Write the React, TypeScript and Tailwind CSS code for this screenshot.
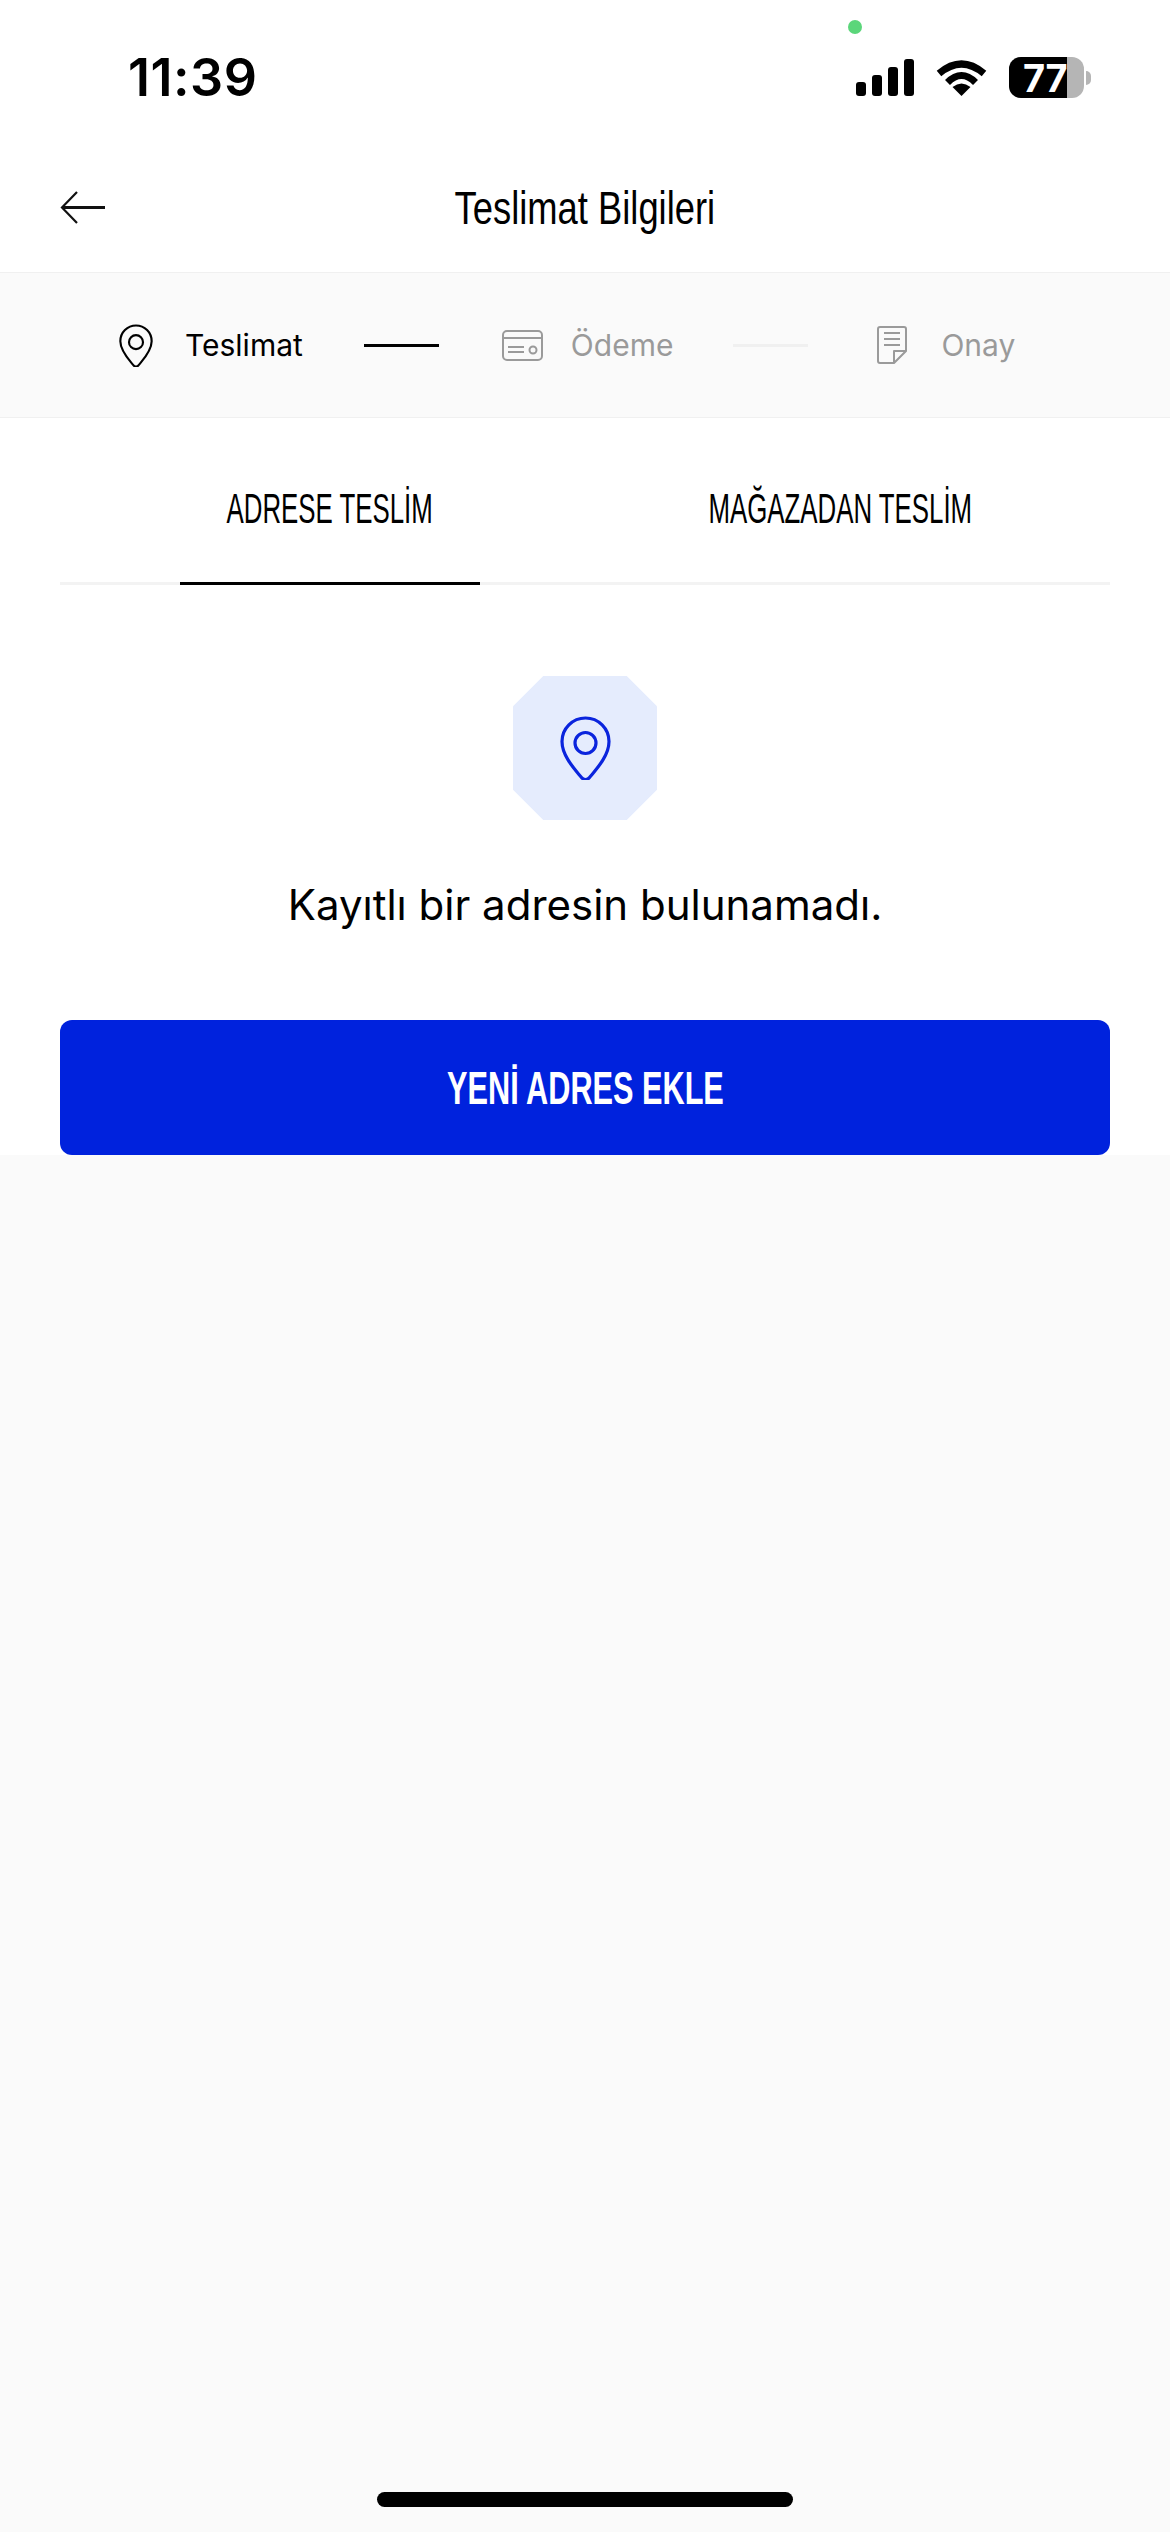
function Pin({ className }: { className?: string }) {
  return (
    <svg viewBox="0 0 51 64" fill="none" stroke="currentColor" strokeWidth="3.2" strokeLinejoin="round" className={className}>
      <path d="M21.5 61.5C15 53.5 2 40 2 25.5a23.5 23.5 0 0 1 47 0C49 40 36 53.5 29.5 61.5a5 5 0 0 1-8 0Z" />
      <circle cx="25.5" cy="27" r="10.5" />
    </svg>
  );
}

function StatusBar() {
  return (
    <div className="relative flex h-[110px] items-end justify-between pb-[6px] pl-[128px] pr-[79px]">
      <span className="absolute left-[848px] top-[20px] h-[14px] w-[14px] rounded-full bg-[#5bd67a]" />
      <span className="font-['Inter'] text-[52px] font-semibold leading-[52px] tracking-[0.5px] text-black">11:39</span>
      <div className="mb-[6px] flex items-center gap-[22px]">
        <svg width="58" height="37" viewBox="0 0 58 37" fill="black">
          <rect x="0" y="23" width="10" height="14" rx="3" />
          <rect x="16" y="16" width="10" height="21" rx="3" />
          <rect x="32" y="8" width="10" height="29" rx="3" />
          <rect x="48" y="0" width="10" height="37" rx="3" />
        </svg>
        <svg width="51" height="37" viewBox="0 0 51 37" fill="none" stroke="black">
          <path d="M3 14.5Q25.5 -4.5 48 14.5" strokeWidth="7" />
          <path d="M11.5 23.5Q25.5 9.5 39.5 23.5" strokeWidth="7" />
          <path d="M16.5 28Q25.5 21 34.5 28L25.5 37Z" fill="black" stroke="none" />
        </svg>
        <div className="flex items-center">
          <div className="flex h-[41px] w-[75px] rounded-[12px] bg-[#b5b5b5]">
            <div className="flex w-[58px] items-center justify-end rounded-l-[12px] bg-black">
              <span className="font-['Inter'] text-[38px] font-bold leading-none tracking-[-0.5px] text-white">77</span>
            </div>
          </div>
          <div className="ml-[2px] h-[14px] w-[5px] rounded-r-full bg-[#b5b5b5]" />
        </div>
      </div>
    </div>
  );
}

function Step({ label, active, children, gap }: { label: string; active?: boolean; children: React.ReactNode; gap: string }) {
  return (
    <div className={`flex items-center ${gap}`}>
      {children}
      <span className={active ? "text-[30px] leading-none text-black" : "text-[30px] leading-none text-[#9a9a9a]"}>{label}</span>
    </div>
  );
}

export default function App() {
  return (
    <div className="flex min-h-[2532px] flex-col bg-[#fafafa] font-['Inter',sans-serif]">
      <div className="bg-white">
        <StatusBar />
        <div className="relative flex h-[163px] items-center justify-center border-b border-[#f0f0f0] pt-[34px]">
          <svg width="46" height="33" viewBox="0 0 46 33" fill="none" stroke="#111" className="absolute left-[60px] top-[81px]">
            <path d="M45 16.500H3" strokeWidth="3" />
            <path d="M17 1L2 16.500L17 32" strokeWidth="2.200" />
          </svg>
          <span className="scale-x-[0.79] whitespace-nowrap font-['Liberation_Sans'] text-[46px] leading-none text-black">Teslimat Bilgileri</span>
        </div>
      </div>

      <div className="flex h-[145px] items-center border-b border-[#f0f0f0] bg-[#fafafa] pl-[119px]">
        <Step label="Teslimat" active gap="gap-[32px]">
          <Pin className="h-[43px] w-[34px] text-black" />
        </Step>
        <div className="ml-[61px] h-[3px] w-[75px] bg-black" />
        <div className="ml-[63px]">
          <Step label="Ödeme" gap="gap-[28px]">
            <svg width="41" height="31" viewBox="0 0 41 31" fill="none" stroke="#9a9a9a" strokeWidth="2">
              <rect x="1" y="1" width="39" height="29" rx="4" />
              <path d="M1 8H40M6 17H22M6 22H22" />
              <circle cx="31" cy="20" r="3.500" />
            </svg>
          </Step>
        </div>
        <div className="ml-[60px] h-[3px] w-[75px] bg-[#f0f0f0]" />
        <div className="ml-[69px]">
          <Step label="Onay" gap="gap-[34px]">
            <svg width="30" height="38" viewBox="0 0 30 38" fill="none" stroke="#9a9a9a" strokeWidth="2" strokeLinejoin="round">
              <path d="M3 1H27A2 2 0 0 1 29 3V25L17 37H3A2 2 0 0 1 1 35V3A2 2 0 0 1 3 1Z" />
              <path d="M17 37V25H29M7 7H23M7 13H23M7 19H23" />
            </svg>
          </Step>
        </div>
      </div>

      <div className="flex flex-col bg-white px-[60px] pb-0">
        <div className="flex h-[167px] gap-[210px] border-b-[3px] border-[#f3f3f3] pl-[120px]">
          <div className="-mb-[3px] flex w-[300px] items-center justify-center border-b-[3px] border-black pt-[18px]">
            <span className="scale-x-[0.615] whitespace-nowrap font-['Liberation_Sans'] text-[42px] leading-none text-black">ADRESE TESLİM</span>
          </div>
          <div className="flex w-[300px] items-center justify-center pt-[18px]">
            <span className="scale-x-[0.615] whitespace-nowrap font-['Liberation_Sans'] text-[42px] leading-none text-black">MAĞAZADAN TESLİM</span>
          </div>
        </div>

        <div className="mt-[91px] flex justify-center">
          <div className="flex h-[144px] w-[144px] items-center justify-center bg-[#e5ecfd] [clip-path:polygon(21%_0,79%_0,100%_21%,100%_79%,79%_100%,21%_100%,0_79%,0_21%)]">
            <Pin className="h-[64px] w-[51px] text-[#0a24dd]" />
          </div>
        </div>

        <p className="mt-[61px] text-center text-[42px] leading-[48px] text-black">Kayıtlı bir adresin bulunamadı.</p>

        <button className="mt-[91px] flex h-[135px] items-center justify-center rounded-[12px] bg-[#0022dd]">
          <span className="scale-x-[0.667] whitespace-nowrap font-['Liberation_Sans'] text-[46px] font-bold leading-none text-white">YENİ ADRES EKLE</span>
        </button>
      </div>

      <div className="mt-auto flex justify-center pb-[25px]">
        <div className="h-[15px] w-[416px] rounded-full bg-black" />
      </div>
    </div>
  );
}
